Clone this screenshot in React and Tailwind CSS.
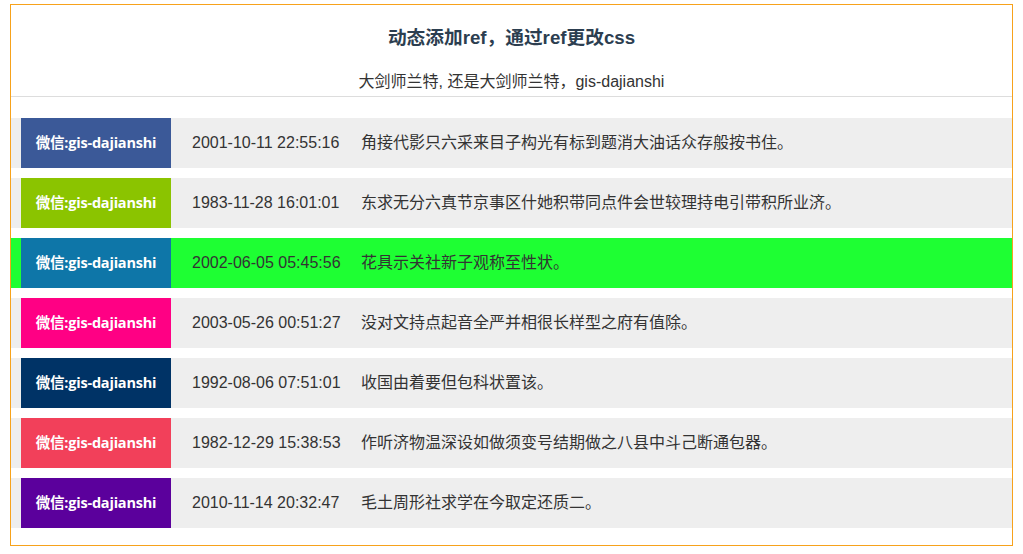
import React from "react";

const rows = [
  { color: "bg-[#3b5998]", date: "2001-10-11 22:55:16", text: "角接代影只六采来目子构光有标到题消大油话众存般按书住。" },
  { color: "bg-[#8bc400]", date: "1983-11-28 16:01:01", text: "东求无分六真节京事区什她积带同点件会世较理持电引带积所业济。" },
  { color: "bg-[#0e76a8]", date: "2002-06-05 05:45:56", text: "花具示关社新子观称至性状。", active: true },
  { color: "bg-[#ff0084]", date: "2003-05-26 00:51:27", text: "没对文持点起音全严并相很长样型之府有值除。" },
  { color: "bg-[#003366]", date: "1992-08-06 07:51:01", text: "收国由着要但包科状置该。" },
  { color: "bg-[#f2405a]", date: "1982-12-29 15:38:53", text: "作听济物温深设如做须变号结期做之八县中斗己断通包器。" },
  { color: "bg-[#5b009c]", date: "2010-11-14 20:32:47", text: "毛土周形社求学在今取定还质二。" },
];

export default function App() {
  return (
    <div className="w-[1023px] h-[554px] bg-white pt-[4px] px-[10px] font-['Liberation_Sans','Noto_Sans_CJK_SC',sans-serif] text-[#333]">
      <div className="w-[1003px] h-[542px] border border-[#f7a21b] flex flex-col">
        <div className="h-[92px] border-b border-[#dddddd] flex flex-col items-center">
          <div className="mt-[20px] text-[18.7px] leading-[26px] font-bold text-[#2c3e50]">动态添加ref，通过ref更改css</div>
          <div className="mt-[20px] text-[16px] leading-[21px] text-[#333]">大剑师兰特, 还是大剑师兰特，gis-dajianshi</div>
        </div>
        <div className="flex flex-col gap-[10px] pt-[21px]">
          {rows.map((r, i) => (
            <div key={i} className={`h-[50px] flex items-center ${r.active ? "bg-[#1eff33]" : "bg-[#eeeeee]"}`}>
              <div className={`ml-[10px] w-[150px] h-[50px] ${r.color} flex items-center justify-center text-white text-[14.5px] font-bold font-['Open_Sans','Noto_Sans_CJK_SC',sans-serif] tracking-[-0.2px]`}>
                微信:gis-dajianshi
              </div>
              <div className="ml-[21px] w-[169px] text-[16px] text-[#333]">{r.date}</div>
              <div className="text-[16px] text-[#333]">{r.text}</div>
            </div>
          ))}
        </div>
      </div>
    </div>
  );
}
